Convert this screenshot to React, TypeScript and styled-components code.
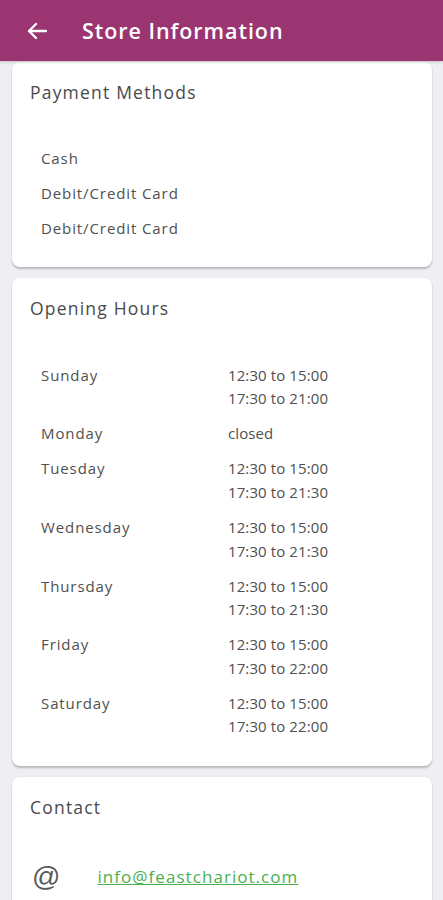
import React from "react";
import styled, { createGlobalStyle } from "styled-components";

const Global = createGlobalStyle`
  html, body { margin: 0; padding: 0; background: #efeff3; }
  body { font-family: "Open Sans", "Liberation Sans", sans-serif; -webkit-font-smoothing: antialiased; }
  * { box-sizing: border-box; }
`;

const Page = styled.div`
  width: 443px;
  height: 900px;
  overflow: hidden;
  display: flex;
  flex-direction: column;
  background: #efeff3;
`;

const Header = styled.header`
  height: 61px;
  flex: none;
  background: #9a3571;
  display: flex;
  align-items: center;
  padding-left: 26px;
  gap: 34px;
  box-shadow: 0 1px 3px rgba(0, 0, 0, 0.2);
  position: relative;
  z-index: 1;
`;

const BackButton = styled.button`
  border: 0;
  background: none;
  padding: 0;
  width: 22px;
  height: 22px;
  display: flex;
  align-items: center;
  justify-content: center;
  cursor: pointer;
`;

const Title = styled.h1`
  margin: 0;
  color: #fff;
  font-size: 21.5px;
  font-weight: 600;
  letter-spacing: 0.95px;
`;

const Content = styled.main`
  display: flex;
  flex-direction: column;
  gap: 11px;
  padding: 1px 11px 0 12px;
`;

const Card = styled.section`
  background: #fff;
  border-radius: 8px;
  box-shadow: 0 2px 2px rgba(0, 0, 0, 0.22), 0 0 2px rgba(0, 0, 0, 0.06);
  padding: 19px 18px 21px;
`;

const CardTitle = styled.h2`
  margin: 0;
  font-size: 17.5px;
  line-height: 22px;
  font-weight: 400;
  color: #4a4a4a;
  letter-spacing: 1.2px;
`;

const List = styled.div<{ $gap: number }>`
  margin-top: ${(p) => p.$gap}px;
  padding-left: 11px;
  display: flex;
  flex-direction: column;
`;

const Row = styled.div`
  display: grid;
  grid-template-columns: 187px 1fr;
  padding: 5.8px 0;
  font-size: 15px;
  line-height: 23.5px;
  color: #505050;
  letter-spacing: 0.9px;
`;

const Item = styled.div`
  padding: 5.75px 0;
  font-size: 15px;
  line-height: 23.5px;
  color: #505050;
  letter-spacing: 0.9px;
`;

const Times = styled.div`
  display: flex;
  flex-direction: column;
  letter-spacing: 0.1px;
`;

const ContactRow = styled.div`
  margin-top: 44px;
  display: flex;
  align-items: center;
  gap: 37px;
  padding-left: 2px;
`;

const At = styled.span`
  font-family: "Liberation Sans", sans-serif;
  font-size: 28px;
  font-weight: 400;
  color: #5a5a5a;
  line-height: 30px;
`;

const Email = styled.a`
  color: #4caf50;
  font-size: 17px;
  text-decoration: underline;
  letter-spacing: 1.05px;
`;

const hours: [string, string[]][] = [
  ["Sunday", ["12:30 to 15:00", "17:30 to 21:00"]],
  ["Monday", ["closed"]],
  ["Tuesday", ["12:30 to 15:00", "17:30 to 21:30"]],
  ["Wednesday", ["12:30 to 15:00", "17:30 to 21:30"]],
  ["Thursday", ["12:30 to 15:00", "17:30 to 21:30"]],
  ["Friday", ["12:30 to 15:00", "17:30 to 22:00"]],
  ["Saturday", ["12:30 to 15:00", "17:30 to 22:00"]],
];

export default function App() {
  return (
    <Page>
      <Global />
      <Header>
        <BackButton aria-label="Back">
          <svg width="20" height="18" viewBox="0 0 20 18" fill="none" stroke="#fff" strokeWidth="2.4" strokeLinecap="round" strokeLinejoin="round">
            <path d="M19 9H2M9 2L2 9l7 7" />
          </svg>
        </BackButton>
        <Title>Store Information</Title>
      </Header>
      <Content>
        <Card>
          <CardTitle>Payment Methods</CardTitle>
          <List $gap={38}>
            <Item>Cash</Item>
            <Item>Debit/Credit Card</Item>
            <Item>Debit/Credit Card</Item>
          </List>
        </Card>
        <Card>
          <CardTitle>Opening Hours</CardTitle>
          <List $gap={39}>
            {hours.map(([day, t]) => (
              <Row key={day}>
                <div>{day}</div>
                <Times>
                  {t.map((x, i) => (
                    <span key={i}>{x}</span>
                  ))}
                </Times>
              </Row>
            ))}
          </List>
        </Card>
        <Card>
          <CardTitle>Contact</CardTitle>
          <ContactRow>
            <At>@</At>
            <Email href="#">info@feastchariot.com</Email>
          </ContactRow>
        </Card>
      </Content>
    </Page>
  );
}
